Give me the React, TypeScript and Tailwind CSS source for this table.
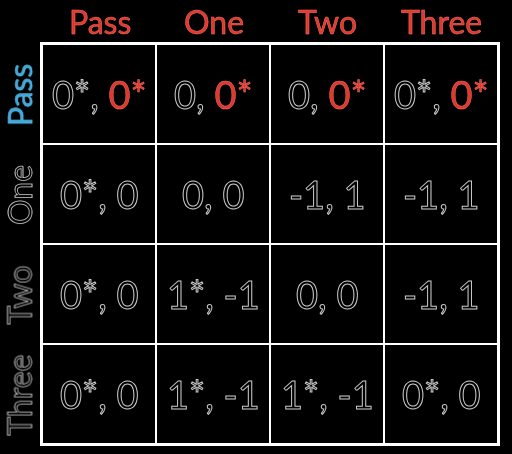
const cols = ["Pass", "One", "Two", "Three"];

type Part = { t: string; red?: boolean };

const rows: { label: string; blue?: boolean; cells: Part[][] }[] = [
  {
    label: "Pass",
    blue: true,
    cells: [
      [{ t: "0*, " }, { t: "0*", red: true }],
      [{ t: "0, " }, { t: "0*", red: true }],
      [{ t: "0, " }, { t: "0*", red: true }],
      [{ t: "0*, " }, { t: "0*", red: true }],
    ],
  },
  {
    label: "One",
    cells: [[{ t: "0*, 0" }], [{ t: "0, 0" }], [{ t: "-1, 1" }], [{ t: "-1, 1" }]],
  },
  {
    label: "Two",
    cells: [[{ t: "0*, 0" }], [{ t: "1*, -1" }], [{ t: "0, 0" }], [{ t: "-1, 1" }]],
  },
  {
    label: "Three",
    cells: [[{ t: "0*, 0" }], [{ t: "1*, -1" }], [{ t: "1*, -1" }], [{ t: "0*, 0" }]],
  },
];

const gray = "text-black [-webkit-text-stroke:1px_#c8c8c8]";
const grayLabel = "text-black [-webkit-text-stroke:0.8px_#c8c8c8]";
const red = "text-[#df392e] [-webkit-text-stroke:0.5px_#ff6f62]";
const blue = "text-[#3aa8e0] [-webkit-text-stroke:0.5px_#74ccf5]";

export default function App() {
  return (
    <div className="w-[512px] h-[454px] bg-black overflow-hidden antialiased font-['Lato','Liberation_Sans',sans-serif]">
      {/* column headers */}
      <div className="flex h-[42px] pl-[43px] pt-[2px]">
        {cols.map((c) => (
          <div key={c} className="w-[114px] flex items-center justify-center">
            <span className={`text-[32px] leading-none will-change-transform ${red}`}>{c}</span>
          </div>
        ))}
      </div>

      <div className="flex">
        {/* row labels */}
        <div className="w-[40px] flex flex-col pt-[3px]">
          {rows.map((r) => (
            <div key={r.label} className="h-[100px] flex items-center justify-center">
              <span className="-rotate-90 will-change-transform">
                <span className={`block whitespace-nowrap text-[32px] leading-none ${r.blue ? blue : grayLabel}`}>
                  {r.label}
                </span>
              </span>
            </div>
          ))}
        </div>

        {/* payoff matrix */}
        <div className="w-[460px] border-[3px] border-white bg-white grid grid-cols-4 gap-[2px]">
          {rows.map((r) =>
            r.cells.map((cell, i) => (
              <div key={r.label + i} className="h-[98px] bg-black flex items-center justify-center text-[38px] leading-none whitespace-pre">
                <span className="will-change-transform">
                  {cell.map((p, j) => (
                    <span key={j} className={p.red ? red : gray}>
                      {p.t}
                    </span>
                  ))}
                </span>
              </div>
            ))
          )}
        </div>
      </div>
    </div>
  );
}
